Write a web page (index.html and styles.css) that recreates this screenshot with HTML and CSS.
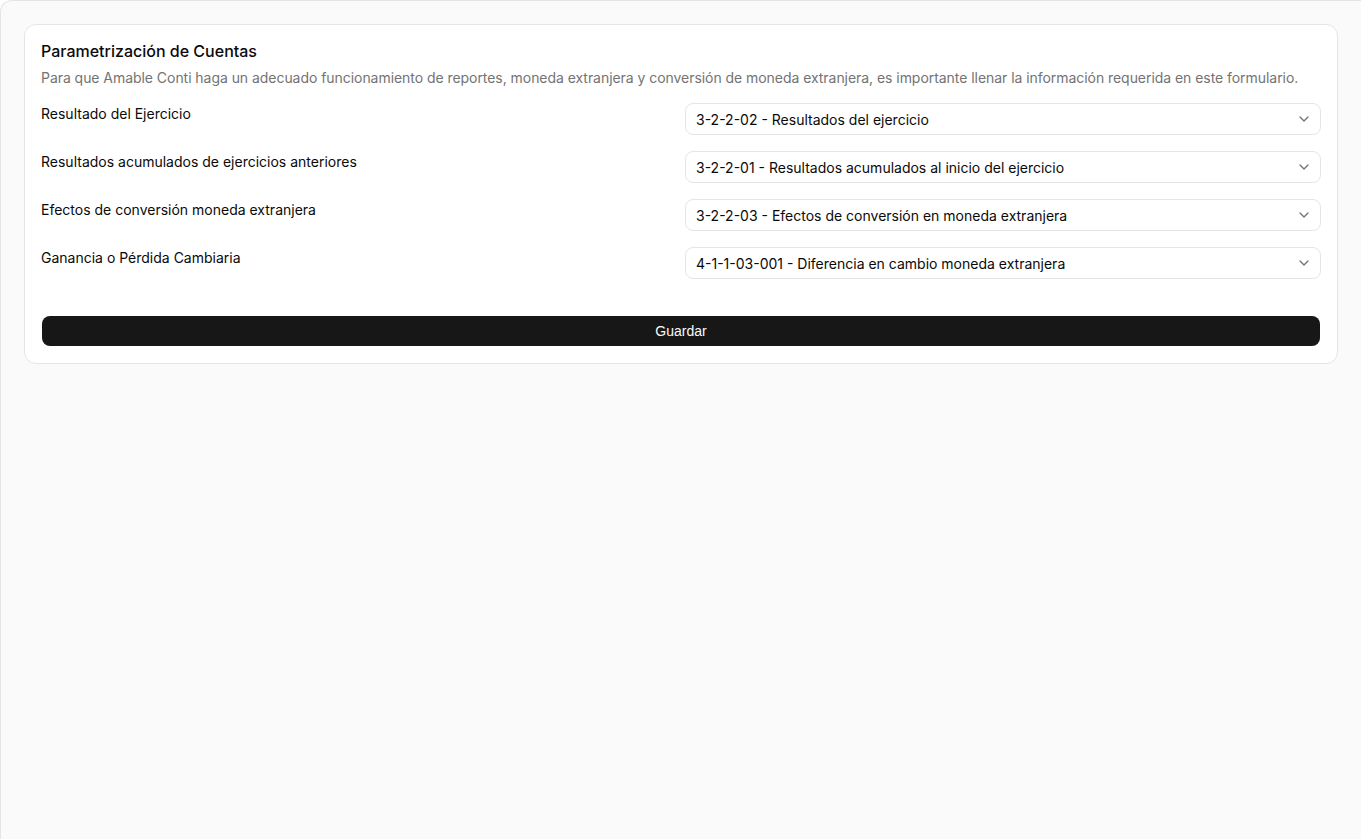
FILE: index.html
```html
<!DOCTYPE html>
<html lang="es">
<head>
<meta charset="utf-8">
<title>Parametrización de Cuentas</title>
<link rel="stylesheet" href="styles.css">
</head>
<body>
<main class="frame">
  <section class="card">
    <header class="card-header">
      <h1 class="card-title">Parametrización de Cuentas</h1>
      <p class="card-desc">Para que Amable Conti haga un adecuado funcionamiento de reportes, moneda extranjera y conversión de moneda extranjera, es importante llenar la información requerida en este formulario.</p>
    </header>
    <form class="form">
      <div class="row">
        <label class="label">Resultado del Ejercicio</label>
        <button type="button" class="select"><span>3-2-2-02 - Resultados del ejercicio</span><svg class="chev" viewBox="0 0 24 24" width="16" height="16"><path d="m6 9 6 6 6-6"/></svg></button>
      </div>
      <div class="row">
        <label class="label">Resultados acumulados de ejercicios anteriores</label>
        <button type="button" class="select"><span>3-2-2-01 - Resultados acumulados al inicio del ejercicio</span><svg class="chev" viewBox="0 0 24 24" width="16" height="16"><path d="m6 9 6 6 6-6"/></svg></button>
      </div>
      <div class="row">
        <label class="label">Efectos de conversión moneda extranjera</label>
        <button type="button" class="select"><span>3-2-2-03 - Efectos de conversión en moneda extranjera</span><svg class="chev" viewBox="0 0 24 24" width="16" height="16"><path d="m6 9 6 6 6-6"/></svg></button>
      </div>
      <div class="row">
        <label class="label">Ganancia o Pérdida Cambiaria</label>
        <button type="button" class="select"><span>4-1-1-03-001 - Diferencia en cambio moneda extranjera</span><svg class="chev" viewBox="0 0 24 24" width="16" height="16"><path d="m6 9 6 6 6-6"/></svg></button>
      </div>
      <button type="button" class="save">Guardar</button>
    </form>
  </section>
</main>
</body>
</html>
```

FILE: styles.css
```css
* { box-sizing: border-box; }
html, body { margin: 0; padding: 0; background: #ffffff; }
body {
  font-family: Inter, "Noto Sans", sans-serif;
  color: #171717;
  overflow: hidden;
}
.frame {
  min-height: 860px;
  width: 1361px;
  background: #fafafa;
  border-left: 1px solid #e5e5e5;
  border-top: 1px solid #e5e5e5;
  border-top-left-radius: 12px;
  padding: 23px 23px 23px 23px;
}
.card {
  background: #ffffff;
  border: 1px solid #e5e5e5;
  border-radius: 12px;
  padding: 16px 16px 17px;
}
.card-header {
  display: flex;
  flex-direction: column;
  gap: 7px;
}
.card-title {
  margin: 0;
  font-size: 16px;
  line-height: 20px;
  font-weight: 500;
  color: #0a0a0a;
}
.card-desc {
  margin: 0;
  font-size: 14px;
  line-height: 20px;
  color: #737373;
  letter-spacing: -0.05px;
}
.form {
  margin-top: 15px;
  display: flex;
  flex-direction: column;
  gap: 16px;
}
.row {
  display: grid;
  grid-template-columns: 1fr 1fr;
  column-gap: 8px;
  align-items: start;
}
.label {
  font-size: 14px;
  line-height: 20px;
  padding-top: 1px;
  color: #0a0a0a;
}
.select {
  height: 32px;
  width: 100%;
  display: flex;
  align-items: center;
  justify-content: space-between;
  padding: 0 8px 0 10px;
  background: #ffffff;
  border: 1px solid #e5e5e5;
  border-radius: 8px;
  font-family: inherit;
  font-size: 14px;
  color: #0a0a0a;
  text-align: left;
}
.chev {
  fill: none;
  stroke: #737373;
  stroke-width: 2;
  stroke-linecap: round;
  stroke-linejoin: round;
  flex: none;
}
.save {
  margin: 21px 1px 0;
  height: 30px;
  border: none;
  border-radius: 8px;
  background: #171717;
  color: #fafafa;
  font-family: "Liberation Sans", Arial, sans-serif;
  font-size: 14px;
  font-weight: 500;
}
```
